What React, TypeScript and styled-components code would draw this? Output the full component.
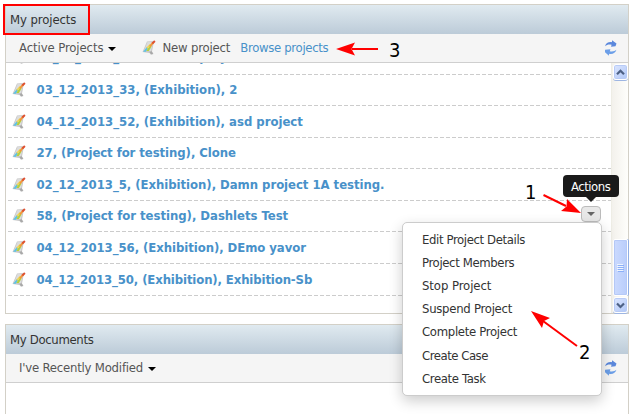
import React from "react";
import styled, { createGlobalStyle } from "styled-components";

const Global = createGlobalStyle`
  html, body { margin: 0; background: #fff; overflow: hidden; height: 414px; }
  * { box-sizing: border-box; }
  body { font: 13px/16px "DejaVu Sans Condensed", "DejaVu Sans", sans-serif; font-stretch: condensed; color: #333; }
`;

const Page = styled.main`
  position: relative;
  width: 633px;
  height: 414px;
  padding: 4px 4px 0 5px;
  overflow: hidden;
  display: flex;
  flex-direction: column;
  gap: 10px;
`;

const Panel = styled.section<{ $height: number }>`
  flex: none;
  width: 624px;
  height: ${(p) => p.$height}px;
  border: 1px solid #d3d0c7;
  display: flex;
  flex-direction: column;
  background: #fff;
`;

const PanelTitle = styled.header`
  flex: none;
  height: 29px;
  padding: 7px 0 0 4px;
  background: linear-gradient(#e0eaf0, #bccbd8);
`;

const Text = styled.span<{ $spacing?: number }>`
  white-space: pre;
  letter-spacing: ${(p) => p.$spacing ?? 0}px;
`;

const Toolbar = styled.div`
  flex: none;
  height: 29px;
  padding: 0 10px 0 13px;
  display: flex;
  align-items: center;
  background: #f5f5f5;
  border-bottom: 1px solid #cfcfcf;
  color: #555;
`;

const Caret = styled.i`
  width: 0;
  height: 0;
  margin: 1px 0 0 5px;
  border: 4px solid transparent;
  border-top-color: #000;
  border-bottom: 0;
`;

const NewProject = styled.div`
  display: flex;
  align-items: center;
  gap: 6px;
  margin-left: 26px;
`;

const Link = styled.a`
  margin-left: 10px;
  color: #4891c9;
`;

const Refresh = styled.div`
  margin-left: auto;
  height: 17px;
  width: 14px;
`;

const Body = styled.div`
  flex: 1;
  min-height: 0;
  display: flex;
`;

const List = styled.div`
  flex: 1;
  height: 250px;
  padding-left: 2px;
  overflow: hidden;
`;

const Row = styled.div<{ $height: number }>`
  height: ${(p) => p.$height}px;
  padding: 0 0 1px 3.5px;
  display: flex;
  align-items: center;
  gap: 11px;
  color: #4891c9;
  font-weight: bold;
  background: repeating-linear-gradient(90deg, #ccc 0 4px, transparent 4px 6px) bottom / 100% 1px no-repeat;
`;

const ClippedRow = styled(Row)`
  align-items: flex-end;
  padding-bottom: 10px;
`;

const ScrollBar = styled.div`
  width: 17px;
  height: 250px;
  border-left: 1px solid #eeede5;
  padding: 1px 1px 0;
  display: flex;
  flex-direction: column;
  background: linear-gradient(90deg, #f3f1ec, #fefefb);
`;

const ScrollButton = styled.div`
  flex: none;
  width: 15px;
  height: 16px;
  display: flex;
  align-items: center;
  justify-content: center;
  border: 1px solid #fff;
  border-radius: 3px;
  background: linear-gradient(135deg, #dce6ff, #b0c7f6);
  box-shadow: inset 0 0 0 1px #b8cbf6, 0 1px 0 #9db5e2;
`;

const Thumb = styled.div`
  width: 15px;
  height: 57px;
  margin: auto 0 1px;
  display: flex;
  align-items: center;
  justify-content: center;
  border: 1px solid #fff;
  border-radius: 2px;
  background: linear-gradient(90deg, #cbdafe, #b9cdfb);
  box-shadow: inset 0 0 0 1px #b5c9f7, 1px 0 0 #91aee3;
`;

const RowButton = styled.button`
  position: absolute;
  left: 581px;
  top: 206px;
  width: 20px;
  height: 16px;
  padding: 0;
  display: flex;
  align-items: center;
  justify-content: center;
  border: 1px solid #bbb;
  border-radius: 4px;
  background: #e8e8e8;
`;

const GreyCaret = styled(Caret)`
  margin: 0;
  border-top-color: #666;
`;

const Tooltip = styled.div`
  position: absolute;
  left: 563px;
  top: 175px;
  width: 56px;
  height: 22px;
  padding: 4px 0 0 8px;
  border-radius: 4px;
  background: #1a1a1a;
  color: #fff;
  &::after {
    content: "";
    position: absolute;
    left: 23px;
    top: 22px;
    border: 5px solid transparent;
    border-top-color: #1a1a1a;
    border-bottom: 0;
  }
`;

const Menu = styled.nav`
  position: absolute;
  left: 402px;
  top: 222px;
  width: 200px;
  height: 174px;
  padding: 5px 0 0 19px;
  display: grid;
  grid-template-rows: repeat(7, 23.2px);
  align-items: center;
  background: #fff;
  border: 1px solid #ccc;
  border-radius: 5px;
  background-clip: padding-box;
  box-shadow: 0 5px 14px rgba(0, 0, 0, 0.2);
`;

const HighlightFrame = styled.div`
  position: absolute;
  left: 3px;
  top: 4px;
  width: 87px;
  height: 31px;
  border: 2px solid #f00;
`;

const Arrows = styled.svg`
  position: absolute;
  left: 0;
  top: 0;
  pointer-events: none;
`;

const Mark = styled.span<{ $x: number; $y: number }>`
  position: absolute;
  left: ${(p) => p.$x}px;
  top: ${(p) => p.$y}px;
  font-size: 20px;
  line-height: 20px;
  color: #000;
`;

const ProjectIcon = () => (
  <svg width="14" height="16" viewBox="0 0 14 16">
    <path d="M5 1.5 12 1 10 11.5 11.600 14 9 14.800 7.500 13 .5 12Z" fill="#c8c8c8" />
    <path d="M5.500 2 11 1.700 9 11 2 11Z" fill="#dcdcdc" />
    <path d="M7.500 12 9.800 11.300 11 14 9 14.300Z" fill="#a8a8a8" />
    <path d="M1.200 11.700 5 6.700 6.200 8.200 3.800 11.800Z" fill="#5cc2e6" />
    <path d="M4.300 11 8 5.200 9.600 6.500 6.800 11Z" fill="#b6d03c" />
    <path d="M4.800 8.300 8.300 4.500" stroke="#f4d44c" strokeWidth="1.300" />
    <path d="M8 6.400 11 2.700" stroke="#f2963a" strokeWidth="2" />
    <path d="M10.300 3.500 12.900 1" stroke="#de5030" strokeWidth="2" />
  </svg>
);

const RefreshIcon = () => (
  <svg width="14" height="16" viewBox="0 0 14 16">
    <path d="M1 6.2C1.600 3.300 4.600 1.700 8 2.200L8 .3 12.500 3.600 11.500 6.300 7 6.700 7.600 4.800C5 4.100 3 4.600 1 6.200Z" fill="#5b88dc" />
    <path d="M12.400 9.800C11.700 13 8.500 14.500 5.100 13.800L5 15.800 1 12.300 1 9.700 6.400 9.200 5.800 11.200C8.400 12 10.500 11.300 12.400 9.800Z" fill="#6c9fe8" />
  </svg>
);

const Chevron = ({ up }: { up?: boolean }) => (
  <svg width="9" height="7" viewBox="0 0 9 7">
    <path d={up ? "M1 5.3 4.5 1.8 8 5.3" : "M1 1.5 4.5 5 8 1.5"} fill="none" stroke="#4d6185" strokeWidth="2.2" />
  </svg>
);

const Grip = () => (
  <svg width="7" height="8" viewBox="0 0 7 8">
    <path d="M0 .5H6M0 2.5H6M0 4.5H6M0 6.5H6" stroke="#eef4fe" />
    <path d="M1 1.5H7M1 3.5H7M1 5.5H7M1 7.5H7" stroke="#8cb0f8" />
  </svg>
);

const projects = [
  { name: "03_12_2013_33, (Exhibition), 2", height: 31, spacing: 0 },
  { name: "04_12_2013_52, (Exhibition), asd project", height: 32, spacing: -0.01 },
  { name: "27, (Project for testing), Clone", height: 31, spacing: -0.07 },
  { name: "02_12_2013_5, (Exhibition), Damn project 1A testing.", height: 32, spacing: -0.04 },
  { name: "58, (Project for testing), Dashlets Test", height: 31, spacing: -0.03 },
  { name: "04_12_2013_56, (Exhibition), DEmo yavor", height: 32, spacing: -0.06 },
  { name: "04_12_2013_50, (Exhibition), Exhibition-Sb", height: 32, spacing: -0.12 },
];

const actions = [
  { label: "Edit Project Details", spacing: -0.38 },
  { label: "Project Members", spacing: -0.37 },
  { label: "Stop Project", spacing: -0.08 },
  { label: "Suspend Project", spacing: -0.27 },
  { label: "Complete Project", spacing: -0.31 },
  { label: "Create Case", spacing: -0.48 },
  { label: "Create Task", spacing: -0.36 },
];

export default function App() {
  return (
    <>
      <Global />
      <Page>
        <Panel $height={310}>
          <PanelTitle><Text $spacing={-0.1}>My projects</Text></PanelTitle>
          <Toolbar>
            <Text $spacing={-0.1}>Active Projects</Text>
            <Caret />
            <NewProject><ProjectIcon /><Text $spacing={-0.18}>New project</Text></NewProject>
            <Link><Text $spacing={-0.32}>Browse projects</Text></Link>
            <Refresh><RefreshIcon /></Refresh>
          </Toolbar>
          <Body>
            <List>
              <ClippedRow $height={12}><ProjectIcon /><Text>04_12_2013_51, (Exhibit project),</Text></ClippedRow>
              {projects.map((p) => (
                <Row key={p.name} $height={p.height}><ProjectIcon /><Text $spacing={p.spacing}>{p.name}</Text></Row>
              ))}
            </List>
            <ScrollBar>
              <ScrollButton><Chevron up /></ScrollButton>
              <Thumb><Grip /></Thumb>
              <ScrollButton><Chevron /></ScrollButton>
            </ScrollBar>
          </Body>
        </Panel>
        <Panel $height={120}>
          <PanelTitle><Text $spacing={-0.33}>My Documents</Text></PanelTitle>
          <Toolbar>
            <Text $spacing={-0.21}>I've Recently Modified</Text>
            <Caret />
            <Refresh><RefreshIcon /></Refresh>
          </Toolbar>
        </Panel>
        <HighlightFrame />
        <RowButton><GreyCaret /></RowButton>
        <Tooltip><Text $spacing={-0.48}>Actions</Text></Tooltip>
        <Menu>{actions.map((a) => <Text key={a.label} $spacing={a.spacing}>{a.label}</Text>)}</Menu>
        <Arrows width="633" height="414" viewBox="0 0 633 414">
          <g stroke="#f00" strokeWidth="2" fill="#f00">
            <path d="M378 49H352" />
            <path d="M336 49 355 42.5 351.500 49 355 55.500Z" stroke="none" />
            <path d="M543.500 195 566 206" />
            <path d="M581 213 561 211 566.500 206.500 567 199Z" stroke="none" />
            <path d="M577 346 543 321" />
            <path d="M531 311 550 318 544 321 542 328Z" stroke="none" />
          </g>
        </Arrows>
        <Mark $x={389} $y={40}>3</Mark>
        <Mark $x={525} $y={182}>1</Mark>
        <Mark $x={579} $y={342}>2</Mark>
      </Page>
    </>
  );
}
